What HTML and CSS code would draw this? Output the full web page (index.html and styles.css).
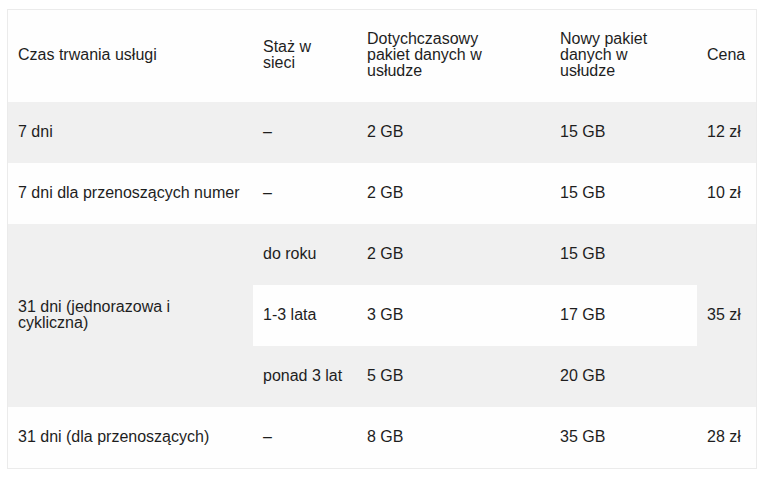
FILE: index.html
```html
<!DOCTYPE html>
<html lang="pl">
<head>
<meta charset="utf-8">
<title>Pakiety danych</title>
<link rel="stylesheet" href="styles.css">
</head>
<body>
<div class="wrap">
<table class="offer">
  <colgroup>
    <col class="c1"><col class="c2"><col class="c3"><col class="c4"><col class="c5">
  </colgroup>
  <thead>
    <tr>
      <th>Czas trwania usługi</th>
      <th>Staż w sieci</th>
      <th class="narrow">Dotychczasowy pakiet danych w usłudze</th>
      <th>Nowy pakiet danych w usłudze</th>
      <th>Cena</th>
    </tr>
  </thead>
  <tbody>
    <tr>
      <td>7 dni</td><td>–</td><td>2 GB</td><td>15 GB</td><td>12 zł</td>
    </tr>
    <tr>
      <td>7 dni dla przenoszących numer</td><td>–</td><td>2 GB</td><td>15 GB</td><td>10 zł</td>
    </tr>
    <tr>
      <td rowspan="3">31 dni (jednorazowa i cykliczna)</td><td>do roku</td><td>2 GB</td><td>15 GB</td><td rowspan="3">35 zł</td>
    </tr>
    <tr>
      <td>1-3 lata</td><td>3 GB</td><td>17 GB</td>
    </tr>
    <tr>
      <td>ponad 3 lat</td><td>5 GB</td><td>20 GB</td>
    </tr>
    <tr>
      <td>31 dni (dla przenoszących)</td><td>–</td><td>8 GB</td><td>35 GB</td><td>28 zł</td>
    </tr>
  </tbody>
</table>
</div>
</body>
</html>
```

FILE: styles.css
```css
html, body {
  margin: 0;
  padding: 0;
  background: #ffffff;
}

.wrap {
  padding: 9px 0 0 7px;
}

.offer {
  table-layout: fixed;
  width: 750px;
  border-collapse: separate;
  border-spacing: 0;
  border: 1px solid #ebebeb;
  font-family: "Liberation Sans", Arial, sans-serif;
  font-size: 16px;
  line-height: 16px;
  color: #1e1e1e;
}

.c1 { width: 245px; }
.c2 { width: 104px; }
.c3 { width: 193px; }
.c4 { width: 147px; }
.c5 { width: 59px; }

.offer th,
.offer td {
  padding: 0 10px 2px;
  text-align: left;
  font-weight: normal;
  vertical-align: middle;
}

.offer th.narrow {
  padding-right: 40px;
}

.offer thead tr {
  height: 92px;
  background: #fefefe;
}

.offer tbody tr {
  height: 61px;
}

.offer tbody tr:nth-child(odd) {
  background: #f0f0f0;
}

.offer tbody tr:nth-child(even) {
  background: #fefefe;
}
```
